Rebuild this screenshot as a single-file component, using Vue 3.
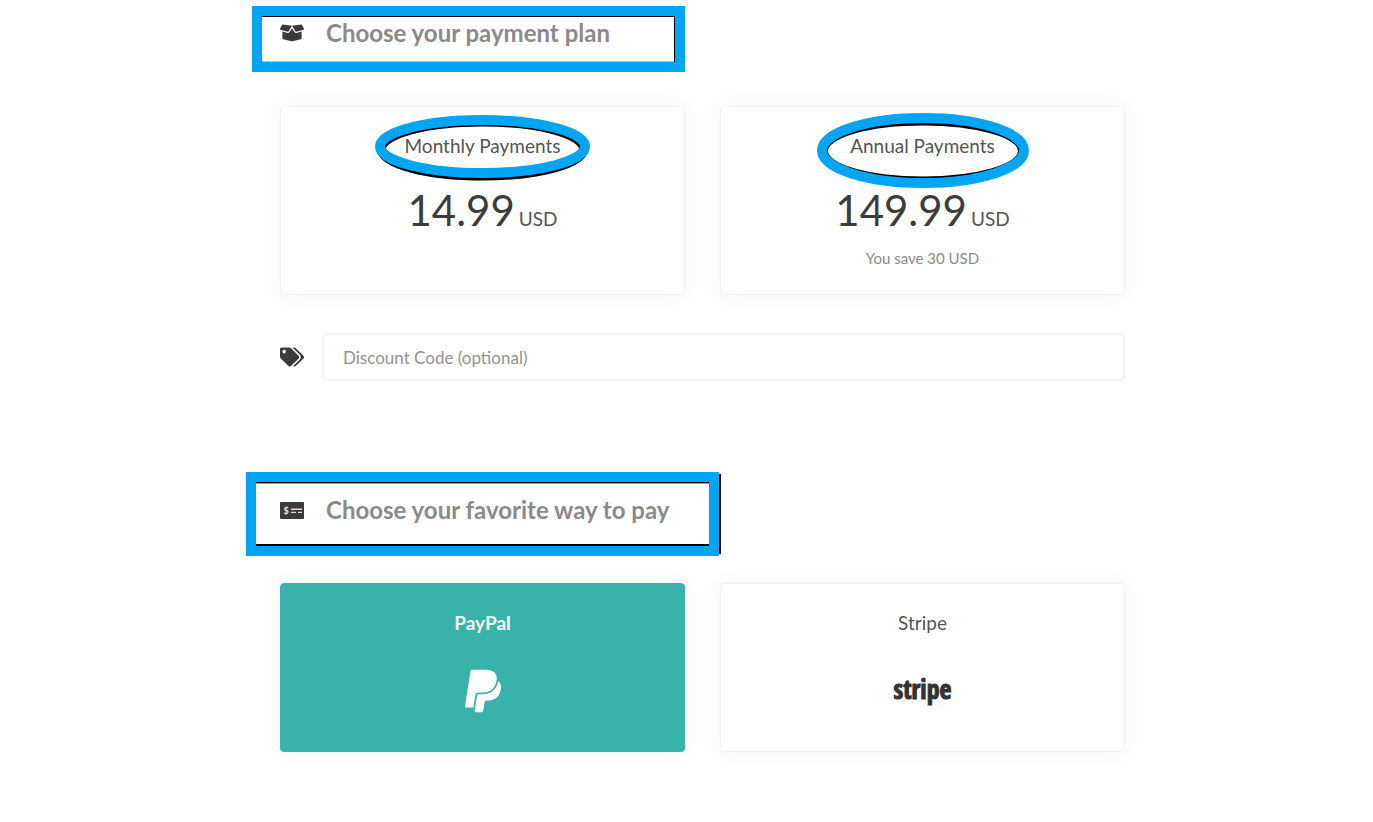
<script setup>
import { ref } from 'vue'

const plans = [
  { id: 'monthly', title: 'Monthly Payments', price: '14.99', note: '' },
  { id: 'annual', title: 'Annual Payments', price: '149.99', note: 'You save 30 USD' },
]
const plan = ref('')
const method = ref('paypal')
const code = ref('')
</script>

<template>
  <main class="page">
    <section class="plans" aria-labelledby="plan-title">
      <header class="heading">
        <svg class="icon" viewBox="0 0 640 512" aria-hidden="true">
          <path d="M425.7 256c-16.9 0-32.8-9-41.4-23.4L320 126l-64.2 106.6c-8.7 14.5-24.6 23.5-41.5 23.5-4.5 0-9-.6-13.3-1.9L64 215v178c0 14.7 10 27.5 24.2 31l216.2 54.1c10.2 2.5 20.9 2.5 31 0L551.8 424c14.2-3.6 24.2-16.4 24.2-31V215l-137 39.1c-4.3 1.3-8.8 1.9-13.3 1.9zm212.6-112.2L586.8 41c-3.1-6.2-9.8-9.8-16.7-8.9L320 64l91.7 152.1c3.8 6.3 11.4 9.3 18.5 7.3l197.9-56.5c9.9-2.9 14.7-13.9 10.2-23.1zM53.2 41L1.7 143.8c-4.6 9.2.3 20.2 10.1 23l197.9 56.5c7.1 2 14.7-1 18.5-7.3L320 64 69.8 32.1c-6.9-.8-13.5 2.7-16.6 8.9z" />
        </svg>
        <h2 id="plan-title">Choose your payment plan</h2>
        <span class="frame frame-plan" aria-hidden="true"></span>
      </header>

      <div class="cards">
        <button
          v-for="p in plans"
          :key="p.id"
          type="button"
          class="card plan"
          :aria-pressed="plan === p.id"
          @click="plan = p.id"
        >
          <span class="title">
            {{ p.title }}
            <svg v-if="p.id === 'monthly'" class="ring ring-monthly" viewBox="0 0 216 68" aria-hidden="true">
              <ellipse class="shade" cx="107.5" cy="34" rx="101" ry="27" stroke-width="9" />
              <ellipse class="stroke" cx="107.5" cy="31.5" rx="102.5" ry="26.5" stroke-width="10" />
            </svg>
            <svg v-else class="ring ring-annual" viewBox="0 0 212 76" aria-hidden="true">
              <ellipse class="shade" cx="107" cy="38" rx="97" ry="27.5" stroke-width="4" />
              <ellipse class="stroke" cx="107" cy="37.5" rx="101" ry="32.5" stroke-width="10" />
            </svg>
          </span>
          <span class="price"><span class="amount">{{ p.price }}</span><span class="unit">USD</span></span>
          <span v-if="p.note" class="note">{{ p.note }}</span>
        </button>
      </div>

      <div class="discount">
        <label for="discount">
          <svg class="icon" viewBox="0 0 640 512" role="img" aria-label="Discount code">
            <path d="M497.941 225.941L286.059 14.059A48 48 0 0 0 252.118 0H48C21.49 0 0 21.49 0 48v204.118a48 48 0 0 0 14.059 33.941l211.882 211.882c18.744 18.745 49.136 18.746 67.882 0l204.118-204.118c18.745-18.745 18.745-49.137 0-67.882zM112 160c-26.51 0-48-21.49-48-48s21.49-48 48-48 48 21.49 48 48-21.49 48-48 48zm513.941 133.823L421.823 497.941c-18.745 18.745-49.137 18.745-67.882 0l-.36-.36L527.64 323.522c16.999-16.999 26.362-39.6 26.362-63.64s-9.362-46.641-26.362-63.64L331.397 0h48.721a48 48 0 0 1 33.941 14.059l211.882 211.882c18.745 18.745 18.745 49.137 0 67.882z" />
          </svg>
        </label>
        <input id="discount" v-model="code" type="text" placeholder="Discount Code (optional)" />
      </div>
    </section>

    <section aria-labelledby="method-title">
      <header class="heading">
        <svg class="icon" viewBox="0 0 24 20" aria-hidden="true">
          <rect y="2" width="24" height="17" rx="1" />
          <path class="lines" d="M11 9.3h11M11 12.4h5M18 12.4h4" />
          <text x="3.5" y="14">$</text>
        </svg>
        <h2 id="method-title">Choose your favorite way to pay</h2>
        <span class="frame frame-method" aria-hidden="true"></span>
      </header>

      <div class="cards">
        <button
          type="button"
          class="card method"
          :class="{ selected: method === 'paypal' }"
          :aria-pressed="method === 'paypal'"
          @click="method = 'paypal'"
        >
          <span class="title">PayPal</span>
          <span class="brand">
            <svg class="paypal" viewBox="0 0 384 512" aria-hidden="true">
              <path d="M111.4 295.9c-3.5 19.2-17.4 108.7-21.5 134-.3 1.8-1 2.5-3 2.5H12.3c-7.6 0-13.1-6.6-12.1-13.9L58.8 46.6c1.5-9.6 10.1-16.9 20-16.9 152.3 0 165.1-3.7 204 11.4 60.1 23.3 65.6 79.5 44 140.3-21.5 62.6-72.5 89.5-140.1 90.3-43.4.7-69.5-7-75.3 24.2zM357.1 152c-1.8-1.3-2.5-1.8-3 1.3-2 11.4-5.1 22.5-8.8 33.6-39.9 113.8-150.5 103.9-204.5 103.9-6.1 0-10.1 3.3-10.9 9.4-22.6 140.4-27.1 169.7-27.1 169.7-1 7.1 3.5 12.9 10.6 12.9h63.5c8.6 0 15.7-6.3 17.4-14.9.7-5.4-1.1 6.1 14.4-91.3 4.6-22 14.3-19.7 29.3-19.7 71 0 126.4-28.8 142.9-112.3 6.5-34.8 4.6-71.4-23.8-92.6z" />
            </svg>
          </span>
        </button>
        <button
          type="button"
          class="card method"
          :class="{ selected: method === 'stripe' }"
          :aria-pressed="method === 'stripe'"
          @click="method = 'stripe'"
        >
          <span class="title">Stripe</span>
          <span class="brand stripe">stripe</span>
        </button>
      </div>
    </section>
  </main>
</template>

<style>
body {
  background: #fff;
}
</style>

<style scoped>
.page {
  box-sizing: border-box;
  padding: 15px 248px 70px 280px;
  font-family: Lato, "Liberation Sans", sans-serif;
  color: #3c3c3c;
}
.plans {
  margin-bottom: 111px;
}
.heading {
  position: relative;
  display: flex;
  align-items: center;
  gap: 22px;
  height: 36px;
  margin-bottom: 55px;
}
h2 {
  margin: 0;
  font-size: 24px;
  line-height: 36px;
  font-weight: 700;
  color: #8a8a8a;
}
.icon {
  display: block;
  width: 24px;
  height: 20px;
  fill: #3a3a3a;
}
.icon .lines {
  stroke: #ddd;
  stroke-width: 1.4;
}
.icon text {
  font-size: 9px;
  font-weight: 700;
  fill: #eee;
}
.frame {
  position: absolute;
  box-sizing: border-box;
  border: 10px solid #00a6f4;
  pointer-events: none;
}
.frame-plan {
  left: -28px;
  top: -9px;
  width: 433px;
  height: 66px;
  box-shadow: inset -1px 1px #000, inset 0 -1px #bbb;
}
.frame-method {
  left: -34px;
  top: -20px;
  width: 473px;
  height: 84px;
  box-shadow: inset 0 1px #000, inset 0 2px #999, inset 0 -2px #000, 4px 0 0 -2px #000;
}
.cards {
  display: grid;
  grid-template-columns: 1fr 1fr;
  gap: 35px;
}
.card {
  display: flex;
  flex-direction: column;
  align-items: center;
  margin: 0;
  border: 1px solid #f1f2f2;
  border-radius: 4px;
  background: #fff;
  box-shadow: 0 0 20px rgba(30, 70, 60, 0.06);
  font: inherit;
  color: inherit;
  cursor: pointer;
}
.plan {
  min-height: 189px;
  padding: 26px 20px 10px;
}
.method {
  min-height: 169px;
  padding: 26px 20px 34px;
}
.title {
  position: relative;
  font-size: 19px;
  line-height: 26px;
  color: #555;
}
.ring {
  position: absolute;
  left: 50%;
  overflow: visible;
  fill: none;
  pointer-events: none;
}
.ring-monthly {
  top: -18px;
  width: 216px;
  height: 68px;
  margin-left: -108px;
}
.ring-annual {
  top: -20px;
  width: 212px;
  height: 76px;
  margin-left: -106px;
}
.ring .shade {
  stroke: #000;
}
.ring .stroke {
  stroke: #00a6f4;
}
.price {
  display: flex;
  align-items: baseline;
  gap: 4px;
  margin-top: 25px;
  line-height: 52px;
  white-space: nowrap;
}
.amount {
  font-size: 42px;
}
.unit {
  font-size: 19px;
  line-height: 24px;
  color: #555;
}
.note {
  margin-top: 11px;
  font-size: 15px;
  line-height: 22px;
  color: #8a8a8a;
}
.discount {
  display: flex;
  align-items: center;
  gap: 18px;
  margin-top: 38px;
}
.discount input {
  flex: 1;
  box-sizing: border-box;
  min-width: 0;
  height: 48px;
  padding: 0 19px;
  border: 2px solid #f3f3f3;
  border-radius: 5px;
  background: #fff;
  font: inherit;
  font-size: 17px;
  color: #3c3c3c;
}
.discount input::placeholder {
  color: #929292;
  opacity: 1;
}
.selected {
  border-color: #3ab2ac;
  background: #3ab2ac;
  color: #fff;
}
.selected .title {
  font-weight: 700;
  color: #f4fffe;
}
.brand {
  display: flex;
  align-items: center;
  height: 48px;
  margin-top: 31px;
}
.paypal {
  width: 36px;
  height: 48px;
  fill: currentColor;
}
.stripe {
  height: 44px;
  font-family: "Liberation Sans Narrow", "Open Sans Condensed", Lato, sans-serif;
  font-size: 26px;
  line-height: 44px;
  font-weight: 900;
  color: #333;
  -webkit-text-stroke: 1px #333;
}
</style>
